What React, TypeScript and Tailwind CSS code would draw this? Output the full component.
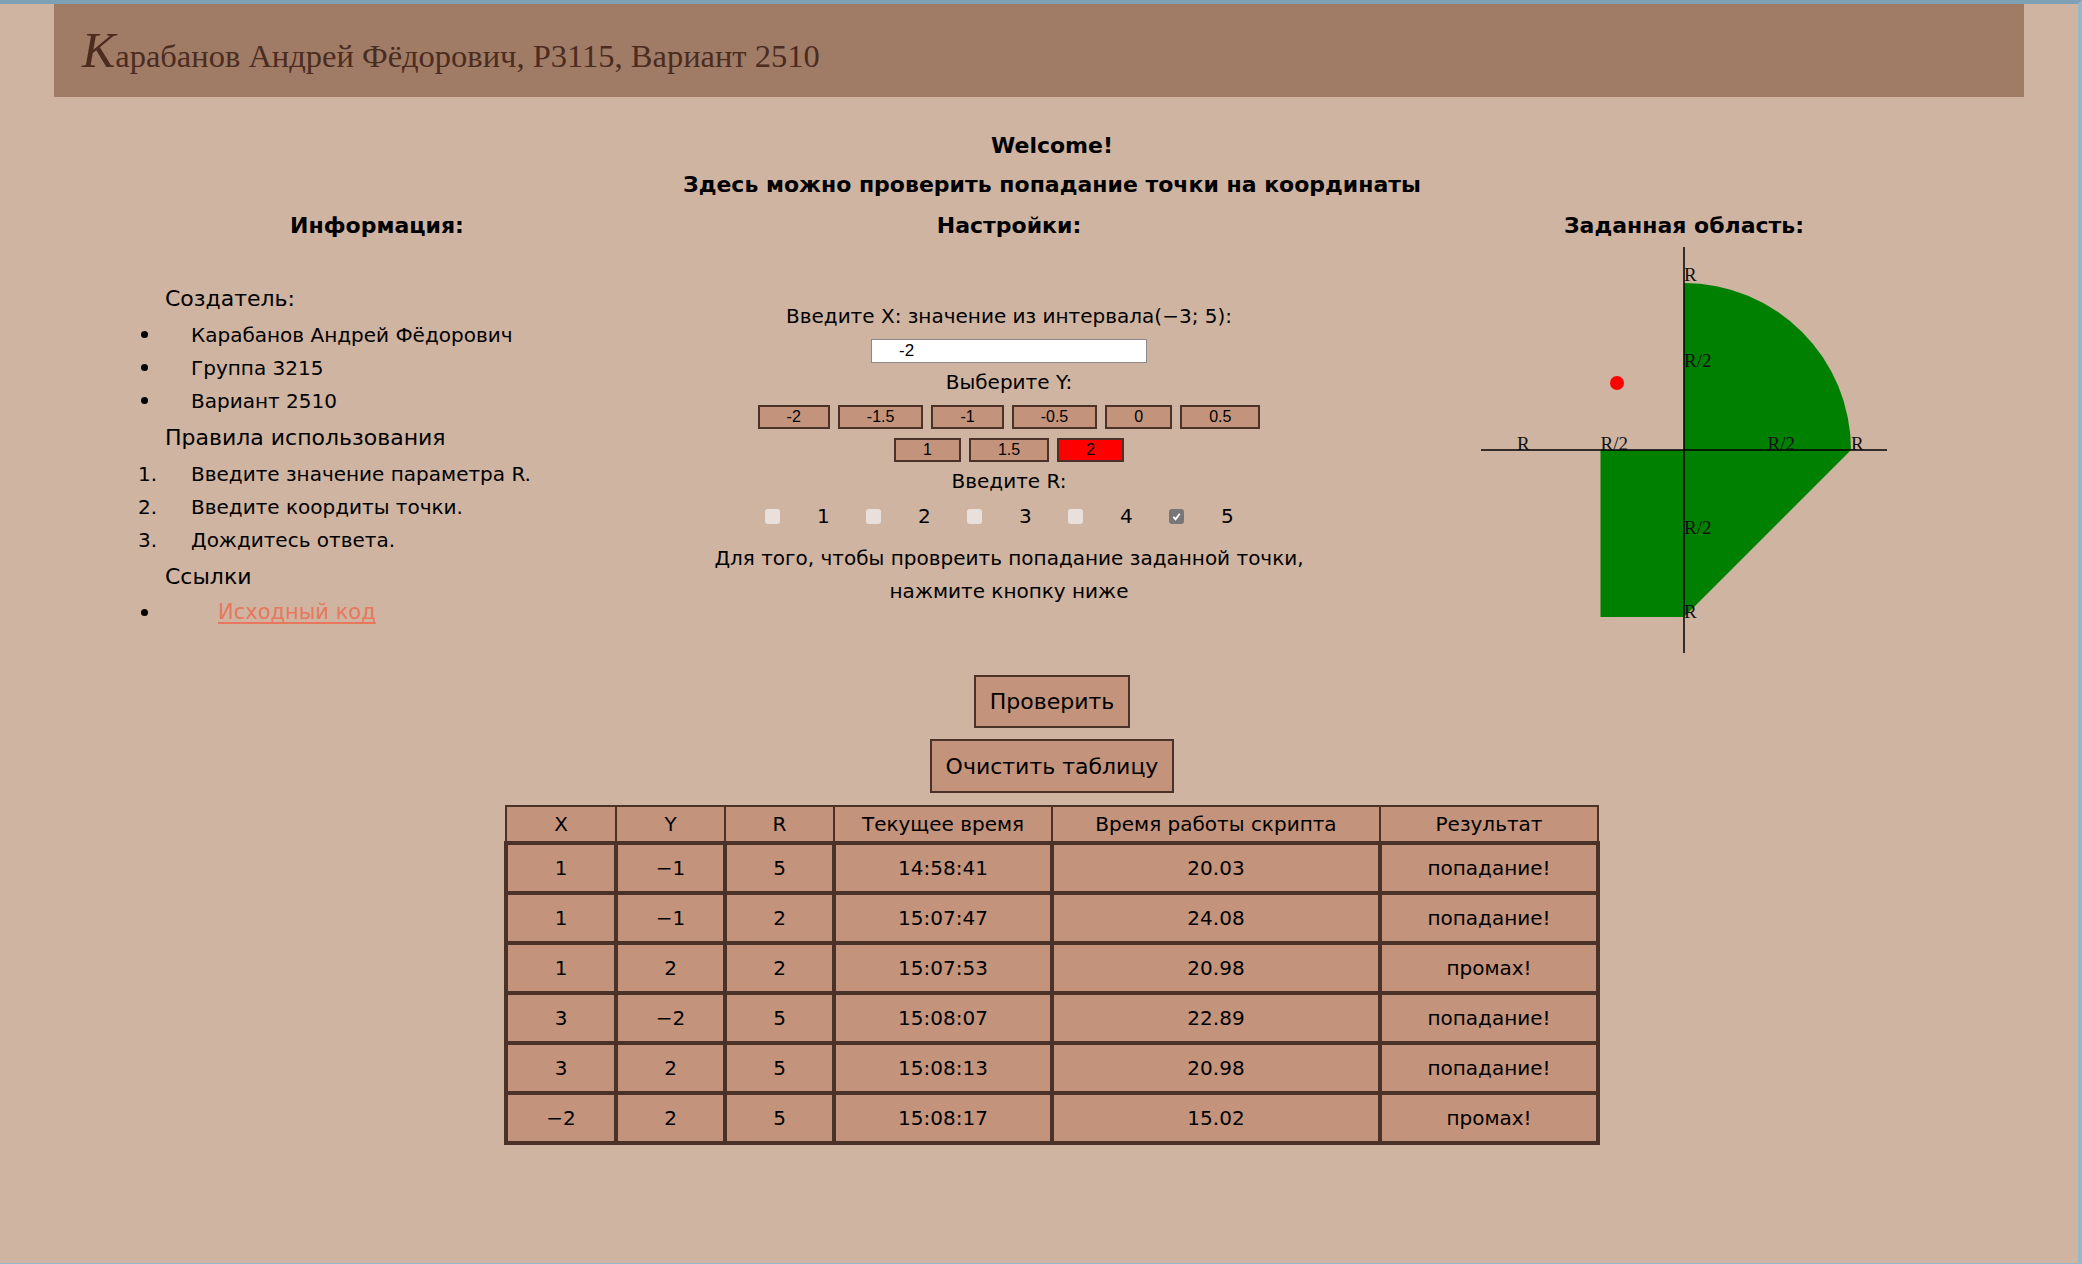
import React from 'react';

const yValues = ['-2', '-1.5', '-1', '-0.5', '0', '0.5'];
const yValues2 = ['1', '1.5', '2'];
const rValues = ['1', '2', '3', '4', '5'];

const rows = [
  ['1', '−1', '5', '14:58:41', '20.03', 'попадание!'],
  ['1', '−1', '2', '15:07:47', '24.08', 'попадание!'],
  ['1', '2', '2', '15:07:53', '20.98', 'промах!'],
  ['3', '−2', '5', '15:08:07', '22.89', 'попадание!'],
  ['3', '2', '5', '15:08:13', '20.98', 'попадание!'],
  ['−2', '2', '5', '15:08:17', '15.02', 'промах!'],
];

const YButton = ({ value, active }: { value: string; active?: boolean }) => (
  <button
    className={
      'h-[24px] px-[27px] border-2 border-[#4a3228] font-["Liberation_Sans",sans-serif] text-[16px] leading-none text-black ' +
      (active ? 'bg-[#ff0000]' : 'bg-[#c4937c]')
    }
  >
    {value}
  </button>
);

const Bullet = () => <span className="inline-block w-[7px] h-[7px] rounded-full bg-black" />;

const Graph = () => {
  const c = 203;
  const R = 167;
  return (
    <svg width="406" height="406" viewBox="0 0 406 406">
      <path d={`M${c},${c} L${c},${c - R} A${R},${R} 0 0 1 ${c + R},${c} Z`} fill="#008000" />
      <path d={`M${c},${c} L${c + R},${c} L${c},${c + R} Z`} fill="#008000" />
      <rect x={c - R / 2} y={c} width={R / 2} height={R} fill="#008000" />
      <line x1="0" y1={c} x2="406" y2={c} stroke="#000" strokeWidth="1.5" />
      <line x1={c} y1="0" x2={c} y2="406" stroke="#000" strokeWidth="1.5" />
      <g fontFamily="'Liberation Serif', serif" fontSize="19" fill="#111">
        <text x={c} y={c - R - 2}>R</text>
        <text x={c} y={c - R / 2}>R/2</text>
        <text x={c} y={c + R / 2}>R/2</text>
        <text x={c} y={c + R + 1}>R</text>
        <text x={c - R} y={c}>R</text>
        <text x={c - R / 2} y={c}>R/2</text>
        <text x={c + R / 2} y={c}>R/2</text>
        <text x={c + R} y={c}>R</text>
      </g>
      <circle cx={c - 67} cy={c - 67} r="7" fill="#ff0000" />
    </svg>
  );
};

export default function App() {
  return (
    <div className="h-[1264px] box-border bg-[#cfb4a2] border-t-4 border-r-4 border-b border-t-[#7fa1b6] border-r-[#97b8cc] border-b-[#97b8cc] font-['DejaVu_Sans',sans-serif] text-black overflow-hidden">
      {/* Header */}
      <header className="ml-[54px] w-[1970px] h-[93px] bg-[#a07b66] flex items-center pl-[28px] pb-[2px]">
        <h1 className="font-['Liberation_Serif',serif] text-[32.5px] text-[#4b2c1f] leading-none">
          <span className="italic text-[50px]">К</span>арабанов Андрей Фёдорович, Р3115, Вариант 2510
        </h1>
      </header>

      <main className="ml-[54px] w-[1996px]">
        <div className="pt-[29px] text-center font-bold text-[22px] leading-[39px]">
          <p>Welcome!</p>
          <p>Здесь можно проверить попадание точки на координаты</p>
        </div>

        <div className="flex items-start">
          {/* Info */}
          <section className="w-[646px] pt-[2px]">
            <h2 className="text-center font-bold text-[22px] leading-[39px]">Информация:</h2>
            <div className="mt-[33px] text-[20px]">
              <h3 className="ml-[111px] h-[40px] flex items-center text-[22px]">Создатель:</h3>
              <ul>
                {['Карабанов Андрей Фёдорович', 'Группа 3215', 'Вариант 2510'].map((t) => (
                  <li key={t} className="flex items-center h-[33px]">
                    <span className="ml-[87px] w-[50px] flex items-center">
                      <Bullet />
                    </span>
                    <span>{t}</span>
                  </li>
                ))}
              </ul>
              <h3 className="ml-[111px] h-[40px] flex items-center text-[22px]">Правила использования</h3>
              <ol>
                {['Введите значение параметра R.', 'Введите коордиты точки.', 'Дождитесь ответа.'].map((t, i) => (
                  <li key={t} className="flex items-center h-[33px]">
                    <span className="ml-[84px] w-[53px]">{i + 1}.</span>
                    <span>{t}</span>
                  </li>
                ))}
              </ol>
              <h3 className="ml-[111px] h-[40px] flex items-center text-[22px]">Ссылки</h3>
              <ul>
                <li className="flex items-center h-[33px]">
                  <span className="ml-[87px] w-[77px] flex items-center">
                    <Bullet />
                  </span>
                  <a href="#" className="text-[21px] text-[#e8775d] underline underline-offset-[3px]">Исходный код</a>
                </li>
              </ul>
            </div>
          </section>

          {/* Settings */}
          <section className="w-[618px] pt-[2px] text-center">
            <h2 className="font-bold text-[22px] leading-[39px]">Настройки:</h2>
            <p className="mt-[58px] text-[20px] leading-[26px]">Введите X: значение из интервала(−3; 5):</p>
            <div className="mt-[10px] flex justify-center">
              <input
                readOnly
                value="-2"
                className="w-[276px] h-[24px] bg-white border border-[#8a8a8a] pl-[27px] font-['Liberation_Sans',sans-serif] text-[17px] text-black outline-none"
              />
            </div>
            <p className="mt-[6px] text-[20px] leading-[26px]">Выберите Y:</p>
            <div className="mt-[10px] flex justify-center gap-[8px]">
              {yValues.map((v) => (
                <YButton key={v} value={v} />
              ))}
            </div>
            <div className="mt-[9px] flex justify-center gap-[8px]">
              {yValues2.map((v) => (
                <YButton key={v} value={v} active={v === '2'} />
              ))}
            </div>
            <p className="mt-[6px] text-[20px] leading-[26px]">Введите R:</p>
            <div className="mt-[9px] h-[26px] flex justify-center items-center gap-[37px] pr-[20px] text-[20px]">
              {rValues.map((v) => (
                <React.Fragment key={v}>
                  {v === '5' ? (
                    <span className="w-[15px] h-[15px] rounded-[3px] bg-[#777777] flex items-center justify-center">
                      <svg width="11" height="11" viewBox="0 0 12 12">
                        <path d="M2.5 6.5 L5 9 L9.5 3" fill="none" stroke="#fff" strokeWidth="2" />
                      </svg>
                    </span>
                  ) : (
                    <span className="w-[15px] h-[15px] rounded-[3px] bg-[#e9e0db]" />
                  )}
                  <span className="w-[12px]">{v}</span>
                </React.Fragment>
              ))}
            </div>
            <div className="mt-[13px] text-[20px] leading-[33px]">
              <p>Для того, чтобы провреить попадание заданной точки,</p>
              <p>нажмите кнопку ниже</p>
            </div>
          </section>

          {/* Graph */}
          <section className="w-[732px] pt-[2px] flex flex-col items-center">
            <h2 className="font-bold text-[22px] leading-[39px]">Заданная область:</h2>
            <div className="mt-[2px]">
              <Graph />
            </div>
          </section>
        </div>

        {/* Actions */}
        <div className="mt-[22px] flex flex-col items-center gap-[11px]">
          <button className="h-[53px] px-[14px] border-2 border-[#4a3228] bg-[#c4937c] text-[22px]">Проверить</button>
          <button className="h-[54px] px-[14px] border-2 border-[#4a3228] bg-[#c4937c] text-[22px]">Очистить таблицу</button>
        </div>

        {/* Results */}
        <div className="mt-[12px] flex justify-center">
          <table className="border-collapse text-[20px] text-center">
            <thead>
              <tr className="h-[37px]">
                {['X', 'Y', 'R', 'Текущее время', 'Время работы скрипта', 'Результат'].map((h, i) => (
                  <th
                    key={h}
                    className={
                      'border-2 border-[#4a3228] bg-[#c4937c] font-normal ' +
                      ['w-[110px]', 'w-[109px]', 'w-[109px]', 'w-[218px]', 'w-[328px]', 'w-[218px]'][i]
                    }
                  >
                    {h}
                  </th>
                ))}
              </tr>
            </thead>
            <tbody>
              {rows.map((r, ri) => (
                <tr key={ri} className="h-[50px]">
                  {r.map((c, ci) => (
                    <td key={ci} className="border-4 border-[#4a3228] bg-[#c4937c]">
                      {c}
                    </td>
                  ))}
                </tr>
              ))}
            </tbody>
          </table>
        </div>
      </main>
    </div>
  );
}
